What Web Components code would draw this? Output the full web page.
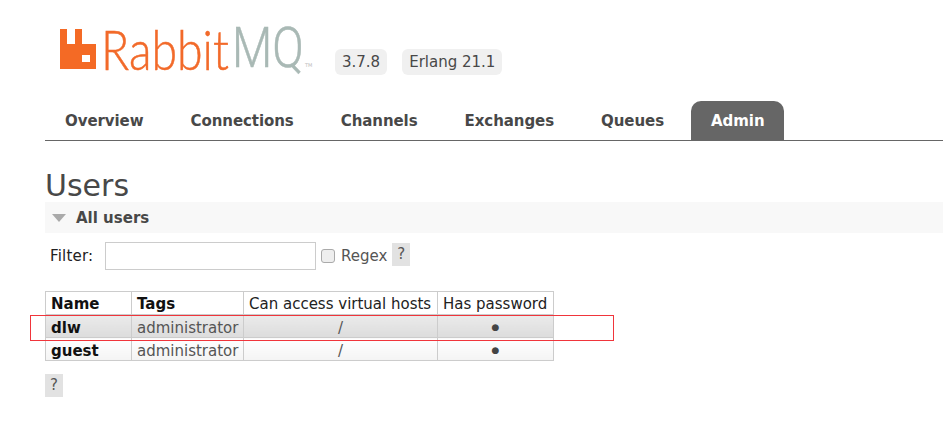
<!DOCTYPE html>
<html>
<head>
<meta charset="utf-8">
<title>RabbitMQ Management</title>
<style>
html,body{margin:0;padding:0;background:#fff;overflow:hidden}
body{font:15px "DejaVu Sans",Verdana,sans-serif;color:#484848}
</style>
</head>
<body>
<rmq-app></rmq-app>
<script>
'use strict';

function define(name, html){
    const template = document.createElement('template');
    template.innerHTML = html;
    customElements.define(name, class extends HTMLElement{
        constructor(){
            super();
            this.attachShadow({mode:'open'});
            this.shadowRoot.appendChild(template.content.cloneNode(true));
        }
    });
}

define('rmq-logo', `<style>
:host{display:flex;align-items:flex-start;height:40px;width:262px;flex:none}
svg{display:block;flex:none}
.word{display:block;flex:none;font:300 56px/39px Lato,sans-serif;height:40px;color:#f26a2a;white-space:nowrap;transform-origin:0 0;-webkit-text-stroke:.5px currentColor}
.rabbit{width:130px;margin-left:5px;transform:scaleX(.83)}
.mq{width:70px;margin-left:1px;font-family:Roboto,sans-serif;color:#a9b9b5;transform:scaleX(.83)}
small{font:5px/5px "DejaVu Sans",sans-serif;color:#bbb;margin:34px 0 0 3px}
</style>
<svg width="36" height="40" viewBox="0 0 36 40"><path fill="#f46a25" fill-rule="evenodd" d="M0 0h7v15h8V0h7v15h14v25H0zM22 26v7h8v-7z"/></svg>
<span class="word rabbit">Rabbit</span><span class="word mq">MQ</span><small>TM</small>`);

define('rmq-badge', `<style>
:host{display:block;background:#f0f0f0;border-radius:6px;padding:0 7px;height:26px;font:15px/26px "DejaVu Sans",sans-serif;color:#484848}
</style><slot></slot>`);

define('rmq-tab', `<style>
:host{display:block;margin-right:7px;padding:0 20px;height:39px;font:bold 15px/40px "DejaVu Sans",sans-serif;color:#484848;border-radius:10px 10px 0 0;letter-spacing:-.07px}
:host([active]){background:#666;color:#fff;padding-right:19px}
</style><slot></slot>`);

define('rmq-help', `<style>
:host{display:inline-block;width:18px;height:23px;background:#e2e2e2;color:#555;font:15px/23px "DejaVu Sans",sans-serif;text-align:center}
</style>?`);

define('rmq-section', `<style>
:host{display:flex;align-items:center;height:31px;background:#f8f8f8;font:bold 15px "DejaVu Sans",sans-serif;color:#484848}
i{width:0;height:0;border:7px solid transparent;border-top:8px solid #aaa;border-bottom:0;margin:0 10px 0 7px}
</style><i></i><slot></slot>`);

define('rmq-filter', `<style>
:host{display:flex;align-items:center;height:29px;margin-top:8px;padding-left:5px;font:15px "DejaVu Sans",sans-serif}
label{color:#222;width:55px;letter-spacing:.2px}
input[type=text]{box-sizing:border-box;width:211px;height:28px;border:1px solid #ccc;margin:0;padding:0;background:#fff}
.check{box-sizing:border-box;width:14px;height:14px;margin:0 6px 0 5px;border:1px solid #aaa;border-radius:3px;background:#eee}
span{color:#555;margin-right:5px}
rmq-help{margin-bottom:2px}
</style><label>Filter:</label><input type="text"><div class="check"></div><span>Regex</span><rmq-help></rmq-help>`);

define('rmq-users-table', `<style>
:host{display:block;margin-top:21px;width:509px;font:15px "DejaVu Sans",sans-serif}
table{border-collapse:collapse;table-layout:fixed;width:509px}
th,td{border:1px solid #ccc;padding:4px 0 0 5px;height:18px;line-height:18px;text-align:left;white-space:nowrap;color:#222;font-weight:normal;overflow:hidden}
th{padding-top:2px;height:20px;line-height:20px}
th:first-child,td:first-child,th:nth-child(2){font-weight:bold;color:#111}
td{color:#555}
td.c{text-align:center;padding-left:0}
td.dot{font-size:9px;color:#444;padding-top:3px;height:19px;line-height:19px}
tr.a td{background:linear-gradient(#ebebeb,#dcdcdc)}
tr.b td{background:linear-gradient(#fff,#f4f4f4)}
</style>
<table>
<colgroup><col style="width:86px"><col style="width:112px"><col style="width:194px"><col style="width:116px"></colgroup>
<tr><th>Name</th><th>Tags</th><th>Can access virtual hosts</th><th>Has password</th></tr>
<tr class="a"><td>dlw</td><td>administrator</td><td class="c">/</td><td class="c dot">●</td></tr>
<tr class="b"><td>guest</td><td>administrator</td><td class="c">/</td><td class="c dot">●</td></tr>
</table>`);

define('rmq-app', `<style>
:host{display:block;position:relative;width:943px;height:437px;overflow:hidden}
header{display:flex;align-items:flex-start;height:101px;padding-left:60px;box-sizing:border-box}
rmq-logo{margin-top:29px}
.badges{display:flex;gap:15px;margin:49px 0 0 13px}
nav{display:flex;margin-left:45px;height:39px;border-bottom:1px solid #666}
main{margin-left:45px}
h1{margin:27px 0 0;font:normal 30px/36px "DejaVu Sans",sans-serif;color:#484848;height:34px}
.outer-help{display:block;margin-top:13px}
.note{position:absolute;left:30px;top:315px;width:582px;height:24px;border:1px solid #f0353b;pointer-events:none}
</style>
<header>
<rmq-logo></rmq-logo>
<div class="badges"><rmq-badge>3.7.8</rmq-badge><rmq-badge>Erlang 21.1</rmq-badge></div>
</header>
<nav>
<rmq-tab>Overview</rmq-tab><rmq-tab>Connections</rmq-tab><rmq-tab>Channels</rmq-tab><rmq-tab>Exchanges</rmq-tab><rmq-tab>Queues</rmq-tab><rmq-tab active>Admin</rmq-tab>
</nav>
<main>
<h1>Users</h1>
<rmq-section>All users</rmq-section>
<rmq-filter></rmq-filter>
<rmq-users-table></rmq-users-table>
<rmq-help class="outer-help"></rmq-help>
</main>
<div class="note"></div>`);
</script>
</body>
</html>
